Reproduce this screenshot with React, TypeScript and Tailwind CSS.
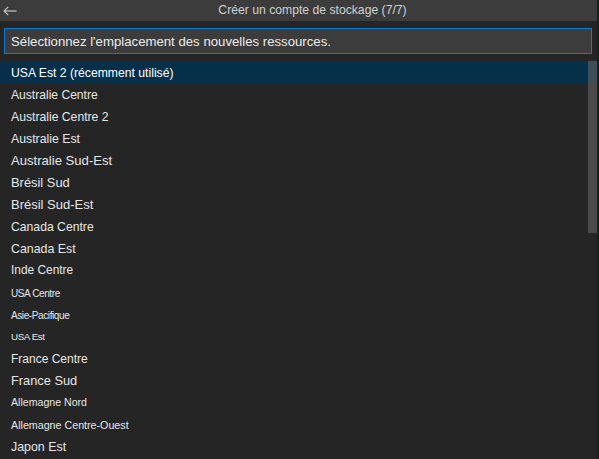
const REGIONS = [
  { label: 'USA Est 2 (récemment utilisé)', size: 'text-[12.2px]', selected: true },
  { label: 'Australie Centre', size: 'text-[12.1px]' },
  { label: 'Australie Centre 2', size: 'text-[12.2px]' },
  { label: 'Australie Est', size: 'text-[12.3px]' },
  { label: 'Australie Sud-Est', size: 'text-[13.1px]' },
  { label: 'Brésil Sud', size: 'text-[12.9px]' },
  { label: 'Brésil Sud-Est', size: 'text-[13px]' },
  { label: 'Canada Centre', size: 'text-[12.2px]' },
  { label: 'Canada Est', size: 'text-[12.4px]' },
  { label: 'Inde Centre', size: 'text-[11.9px]' },
  { label: 'USA Centre', size: 'text-[10px] tracking-[-0.4px]' },
  { label: 'Asie-Pacifique', size: 'text-[10px] tracking-[-0.4px]' },
  { label: 'USA Est', size: 'text-[9.8px] tracking-[-0.4px]' },
  { label: 'France Centre', size: 'text-[12px]' },
  { label: 'France Sud', size: 'text-[12.8px]' },
  { label: 'Allemagne Nord', size: 'text-[10.6px]' },
  { label: 'Allemagne Centre-Ouest', size: 'text-[10.7px]' },
  { label: 'Japon Est', size: 'text-[12.4px]' },
];

function BackArrow() {
  return (
    <svg width="14" height="10" viewBox="0 0 14 10" fill="none" stroke="#c5c5c5" strokeWidth="1.2">
      <path d="M13.5 5H1.2" />
      <path d="M5.2 0.8L1 5l4.2 4.2" />
    </svg>
  );
}

export default function App() {
  return (
    <div className="w-[599px] h-[459px] overflow-hidden bg-[#1e1e1e] text-[#e6e6e6]" style={{ fontFamily: '"Liberation Sans", Arial, sans-serif' }}>
      <div className="w-[597px] h-full bg-[#252526] flex flex-col">
        <div className="h-[21px] bg-[#3c3c3c] flex items-center shrink-0">
          <div className="w-[28px] flex items-center pl-[3px]">
            <BackArrow />
          </div>
          <div className="flex-1 text-center text-[12.2px] text-[#d0d0d0] leading-none pb-[1px]">Créer un compte de stockage (7/7)</div>
        </div>
        <div className="pt-[7px] pl-[4px] pr-[5px] shrink-0">
          <div className="h-[26px] bg-[#3c3c3c] border border-[#0a7bd4] flex items-center pl-[6px] pt-[1px] text-[13.2px] text-[#ececec]">
            Sélectionnez l'emplacement des nouvelles ressources.
          </div>
        </div>
        <div className="relative mt-[7px] flex-1">
          {REGIONS.map((r) => (
            <div
              key={r.label}
              className={`h-[22px] flex items-center pt-[2px] pl-[11px] pr-[9px] ${r.size} ${r.selected ? 'bg-[#062f4a] text-white' : ''}`}
            >
              {r.label}
            </div>
          ))}
          <div className="absolute right-0 top-0 w-[9px] h-[172px] bg-[rgba(100,100,100,0.6)]" />
        </div>
      </div>
    </div>
  );
}
